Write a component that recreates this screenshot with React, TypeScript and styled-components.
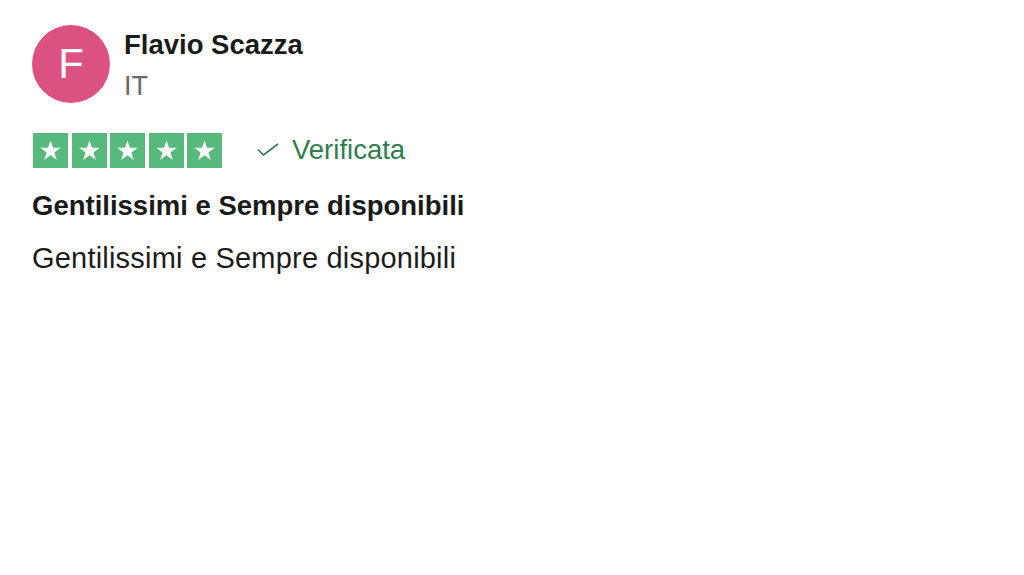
import { createGlobalStyle, styled } from "styled-components";

const GlobalStyle = createGlobalStyle`
  html, body {
    margin: 0;
    padding: 0;
    background: #ffffff;
  }
  body {
    font-family: "Liberation Sans", Arial, sans-serif;
    color: #1c1c1c;
  }
`;

const Card = styled.article`
  display: flex;
  flex-direction: column;
  padding: 25px 32px;
`;

const Header = styled.header`
  display: flex;
  align-items: flex-start;
  column-gap: 14px;
`;

const Avatar = styled.div`
  width: 78px;
  height: 78px;
  border-radius: 50%;
  background: #db5182;
  color: #ffffff;
  display: flex;
  align-items: center;
  justify-content: center;
  font-size: 42px;
  line-height: 1;
  flex-shrink: 0;
`;

const Who = styled.div`
  display: flex;
  flex-direction: column;
  row-gap: 9px;
  padding-top: 3.5px;
`;

const Name = styled.span`
  font-size: 27.5px;
  font-weight: 700;
  line-height: 32px;
  color: #1a1a1a;
`;

const Country = styled.span`
  font-size: 27px;
  line-height: 32px;
  color: #6a6a6a;
`;

const RatingRow = styled.div`
  display: flex;
  align-items: center;
  margin-top: 30px;
  column-gap: 35px;
`;

const Stars = styled.div`
  display: flex;
  column-gap: 3.5px;
  padding-left: 1px;
`;

const StarBox = styled.div<{ $on: boolean }>`
  width: 35px;
  height: 35px;
  background: ${(p) => (p.$on ? "#57b97b" : "#dcdce6")};
  display: flex;
  align-items: center;
  justify-content: center;
`;

const Verified = styled.div`
  display: flex;
  align-items: center;
  column-gap: 13px;
  color: #2f7c4f;
  font-size: 27.5px;
  line-height: 1;
  padding-bottom: 2px;
`;

const Title = styled.h2`
  margin: 21.5px 0 0;
  font-size: 27.5px;
  font-weight: 700;
  line-height: 32px;
  color: #1a1a1a;
`;

const Body = styled.p`
  margin: 19px 0 0;
  font-size: 29px;
  line-height: 34px;
  letter-spacing: 0.2px;
  color: #1c1c1c;
`;

function Star() {
  return (
    <svg width="23" height="23" viewBox="0 0 24 24">
      <path
        fill="#ffffff"
        d="M12 1.5l2.6 7.7h8.1l-6.6 4.8 2.5 7.8L12 16.9l-6.6 4.9 2.5-7.8-6.6-4.8h8.1z"
      />
    </svg>
  );
}

function Check() {
  return (
    <svg width="22" height="13" viewBox="0 0 22 13" fill="none">
      <path d="M1 6.5l5.5 5.5L21 1" stroke="#2f7c4f" strokeWidth="1.6" />
    </svg>
  );
}

export default function App() {
  const rating = 5;
  return (
    <>
      <GlobalStyle />
      <Card>
        <Header>
          <Avatar>F</Avatar>
          <Who>
            <Name>Flavio Scazza</Name>
            <Country>IT</Country>
          </Who>
        </Header>
        <RatingRow>
          <Stars>
            {[1, 2, 3, 4, 5].map((n) => (
              <StarBox key={n} $on={n <= rating}>
                <Star />
              </StarBox>
            ))}
          </Stars>
          <Verified>
            <Check />
            Verificata
          </Verified>
        </RatingRow>
        <Title>Gentilissimi e Sempre disponibili</Title>
        <Body>Gentilissimi e Sempre disponibili</Body>
      </Card>
    </>
  );
}
